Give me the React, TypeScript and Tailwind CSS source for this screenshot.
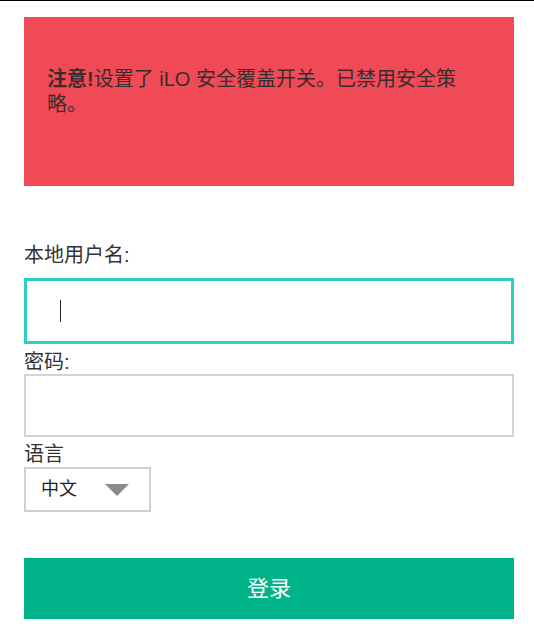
export default function App() {
  return (
    <div className="w-[534px] h-[627px] bg-white overflow-hidden font-['Liberation_Sans','Noto_Sans_CJK_SC',sans-serif] text-[#333]">
      <div className="h-[1px] bg-black" />
      <div className="pl-[24px] pr-[20px]">
        <div className="mt-[16px] h-[169px] bg-[#ef4a55] pl-[23px] pr-[44px] pt-[50px] text-[20px] leading-[25px] text-[#3a2c2e]">
          <p>
            <b className="font-bold">注意!</b>设置了 iLO 安全覆盖开关。已禁用安全策略。
          </p>
        </div>
        <div className="mt-[57px] text-[20px] leading-[24px]">本地用户名:</div>
        <div className="mt-[11px] h-[66px] border-[3px] border-[#2ed0c6] flex items-center pl-[33px]">
          <div className="w-[1px] h-[22px] bg-[#222]" />
        </div>
        <div className="mt-[6px] text-[20px] leading-[24px]">密码:</div>
        <div className="h-[63px] border-2 border-[#d4d4d4]" />
        <div className="mt-[5px] text-[20px] leading-[24px]">语言</div>
        <div className="mt-[1px] w-[127px] h-[45px] border-2 border-[#cfcfcf] flex items-center pl-[15px]">
          <span className="text-[18px] text-[#222]">中文</span>
          <svg className="ml-[28px]" width="24" height="12" viewBox="0 0 24 12">
            <polygon points="0,0 24,0 12,12" fill="#8a8a8a" />
          </svg>
        </div>
        <div className="mt-[46px] h-[61px] bg-[#01b388] flex items-center justify-center text-white text-[22px]">
          登录
        </div>
      </div>
    </div>
  );
}
